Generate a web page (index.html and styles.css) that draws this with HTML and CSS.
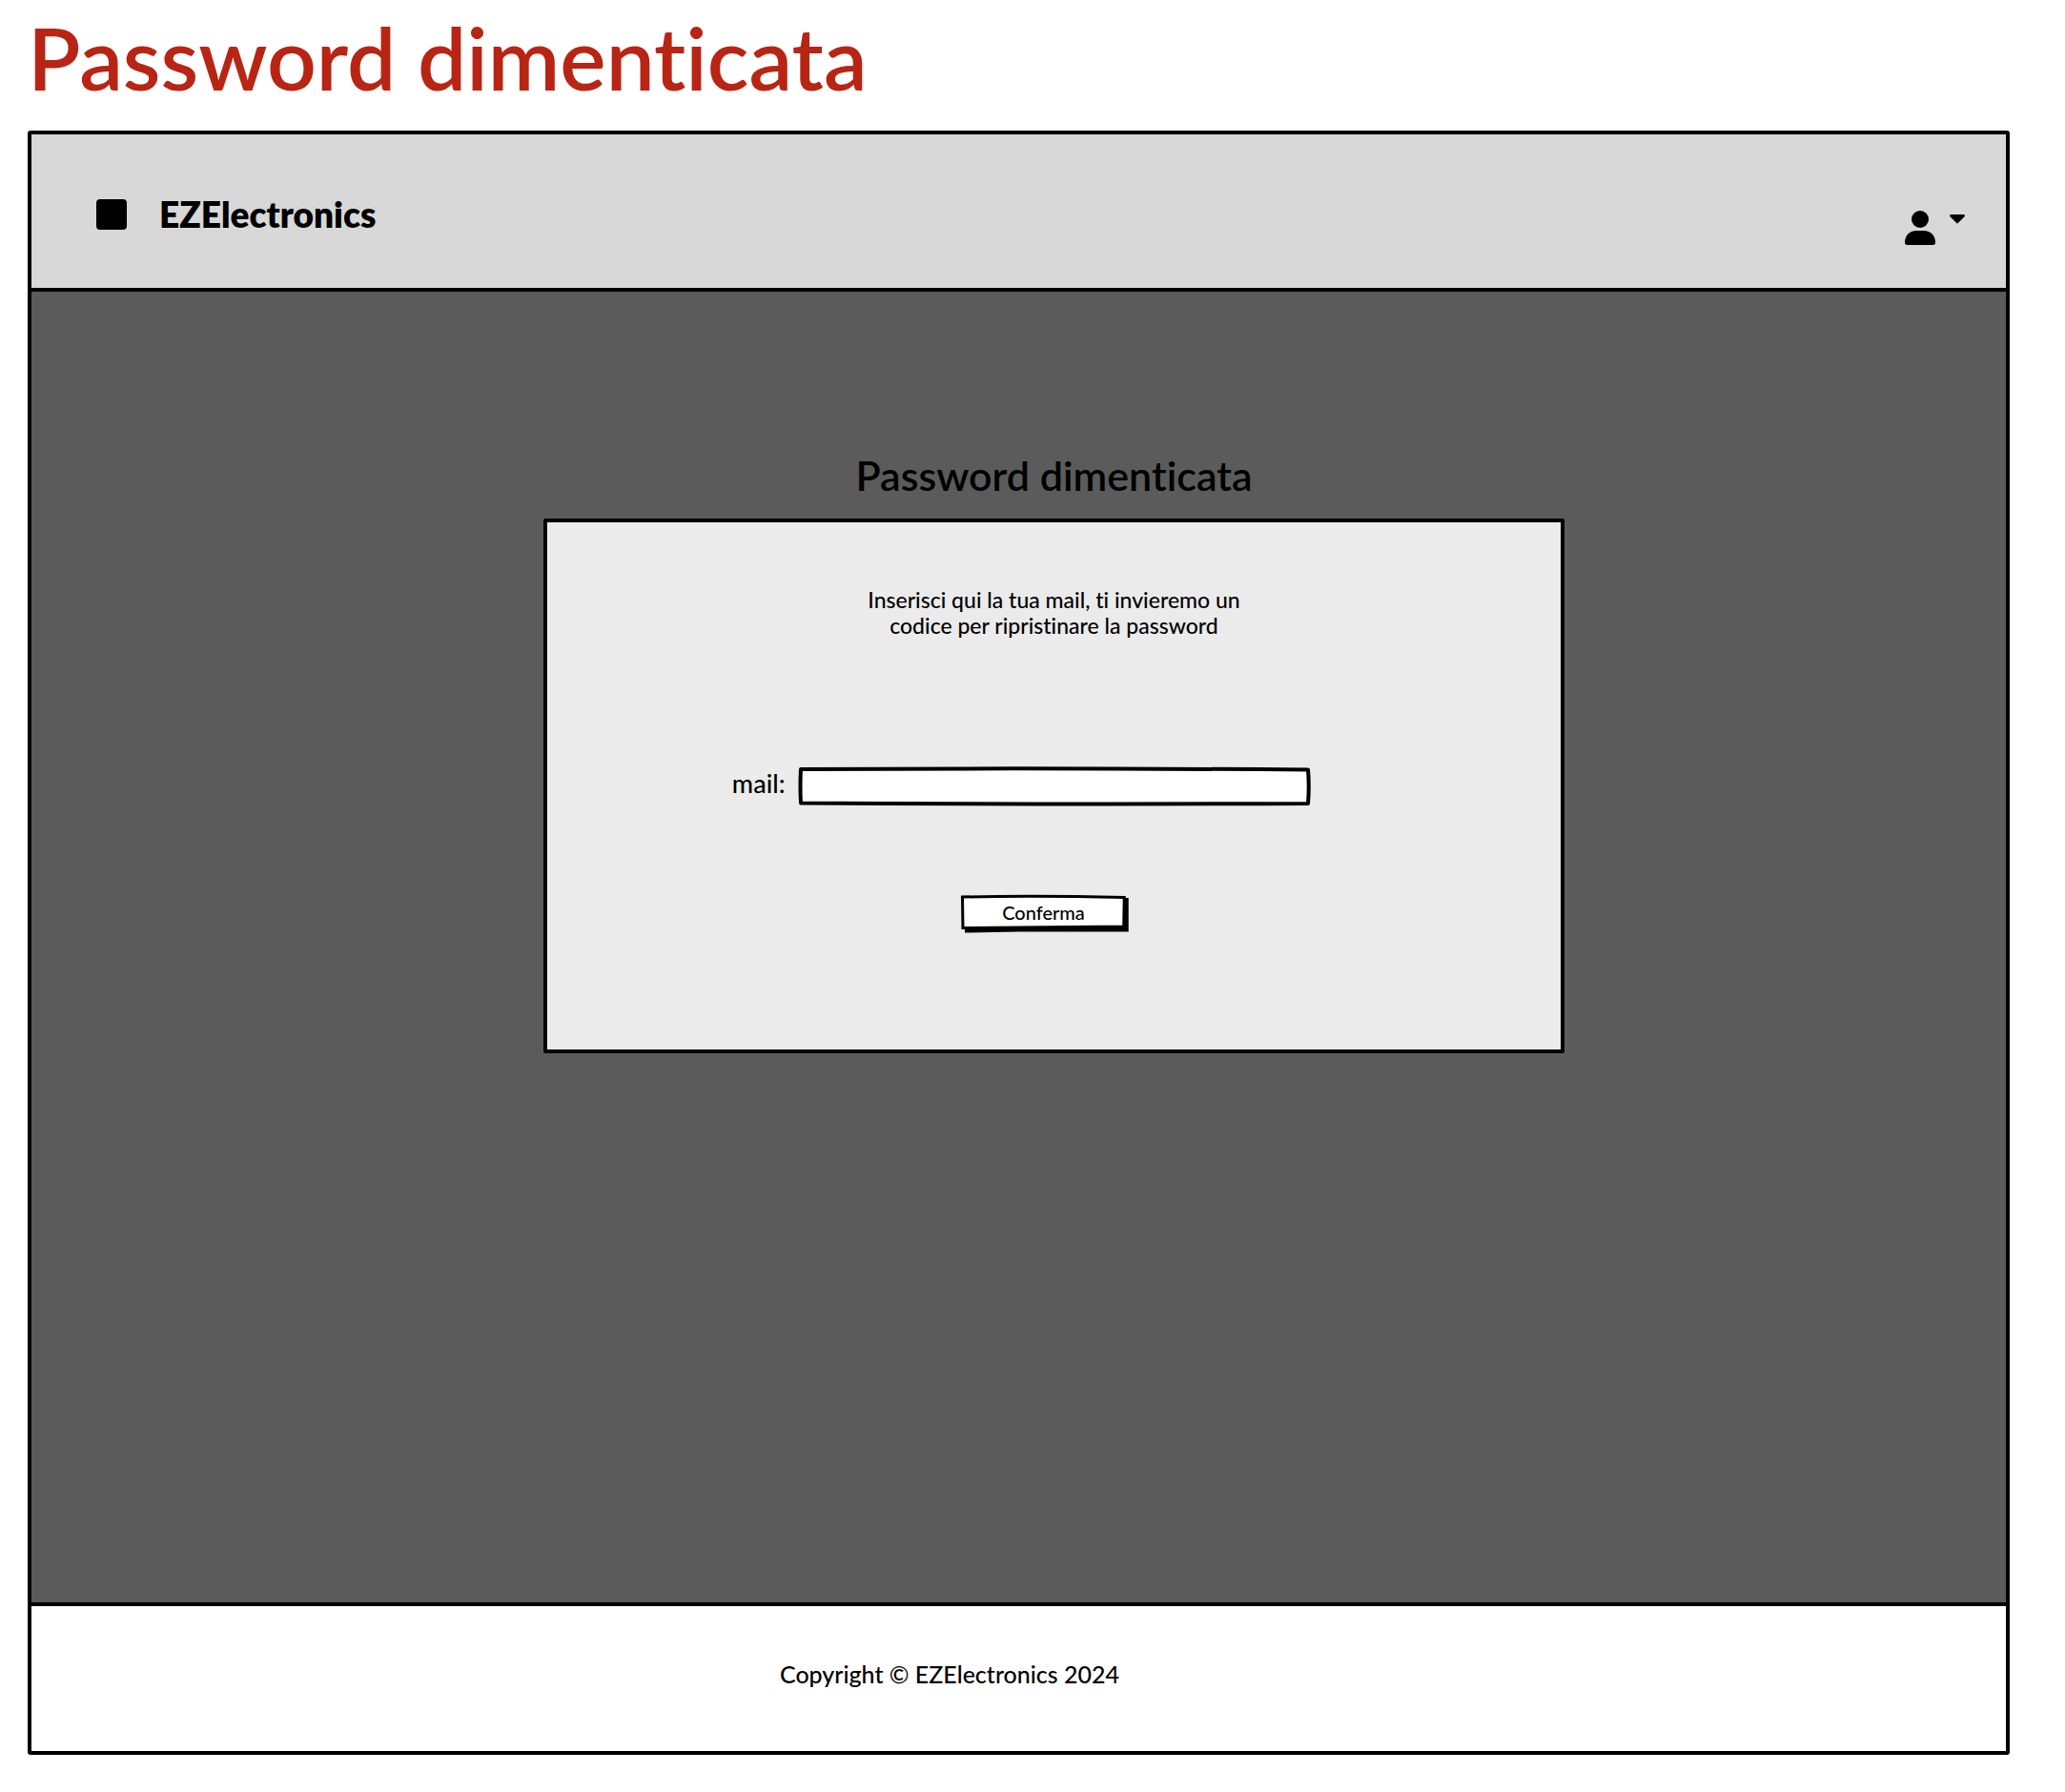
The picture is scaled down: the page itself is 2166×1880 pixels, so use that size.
FILE: index.html
```html
<!DOCTYPE html>
<html lang="it">
<head>
  <meta charset="utf-8">
  <meta name="viewport" content="width=device-width, initial-scale=1">
  <title>Password dimenticata</title>
  <link rel="stylesheet" href="styles.css">
</head>
<body>
  <h1 class="page-title">Password dimenticata</h1>
  <div class="frame">
    <header class="header">
      <a class="brand" href="#">
        <span class="brand-mark"></span>
        <span>EZElectronics</span>
      </a>
      <button class="account" type="button" aria-label="Account">
        <svg class="account-user" viewBox="0 0 32 37" aria-hidden="true">
          <circle cx="16" cy="10" r="9"/>
          <path d="M2.500 37C.8 37 0 36 0 34.500 0 27 5 22 12 22h8c7 0 12 5 12 12.500 0 1.500-.8 2.500-2.500 2.500z"/>
        </svg>
        <svg class="account-caret" viewBox="0 0 16 10" aria-hidden="true">
          <path d="M1.500 0h13C16 0 16.300 1.500 15.300 2.500L8.800 9c-.5.500-1.100.500-1.600 0L.7 2.500C-.3 1.500 0 0 1.500 0z"/>
        </svg>
      </button>
    </header>
    <main class="main">
      <h2 class="card-title">Password dimenticata</h2>
      <form class="card">
        <p class="card-text">Inserisci qui la tua mail, ti invieremo un codice per ripristinare la password</p>
        <div class="field">
          <label class="field-label" for="mail">mail:</label>
          <div class="sketch">
            <svg class="sketch-outline" viewBox="0 0 536 40" preserveAspectRatio="none" aria-hidden="true">
              <path d="M2 2Q260 .5 534 2.500 535.500 20 534 38 270 39 2 37.500 1 20 2 2z" fill="#fff" stroke="#000" stroke-width="4" stroke-linejoin="round"/>
            </svg>
            <input class="field-input" id="mail" type="email">
          </div>
        </div>
        <button class="sketch confirm" type="submit">
          <svg class="sketch-outline" viewBox="0 0 173 36" preserveAspectRatio="none" aria-hidden="true">
            <path d="M4 33V39.500L60 38.500 176 38.500V3H171V32z"/>
            <path d="M1.500 2Q80 .5 171.500 2.500L171 33Q90 33.500 2 34.500z" fill="#fff" stroke="#000" stroke-width="3"/>
          </svg>
          <span class="confirm-text">Conferma</span>
        </button>
      </form>
    </main>
    <footer class="footer">Copyright © EZElectronics 2024</footer>
  </div>
</body>
</html>
```
FILE: styles.css
```css
* {
  box-sizing: border-box;
}

body {
  margin: 0;
  padding: 0 58px 40px 29px;
  background: #fff;
  color: #000;
  font-family: Lato, "Open Sans", sans-serif;
  font-weight: 500;
  font-variant-ligatures: none;
}

button,
input {
  margin: 0;
  padding: 0;
  border: 0;
  background: none;
  color: inherit;
  font: inherit;
}

.page-title {
  margin: 0;
  padding-bottom: 17px;
  color: #b82514;
  font-size: 91px;
  font-weight: 600;
  line-height: 120px;
}

.frame {
  border: 4px solid #000;
  border-radius: 3px;
}

.header {
  display: flex;
  justify-content: space-between;
  align-items: flex-start;
  padding: 60px 43px 45px 68px;
  border-bottom: 4px solid #000;
  background: #d8d8d8;
}

.brand {
  display: flex;
  align-items: center;
  gap: 34px;
  color: inherit;
  font-size: 37px;
  font-weight: 800;
  line-height: 48px;
  text-decoration: none;
}

.brand-mark {
  width: 32px;
  height: 32px;
  border-radius: 4px;
  background: #000;
}

.account {
  display: flex;
  align-items: flex-start;
  gap: 15px;
  padding-top: 19px;
}

.account-user {
  width: 32px;
  height: 37px;
}

.account-caret {
  width: 16px;
  height: 10px;
  margin-top: 5px;
}

.main {
  display: flex;
  flex-direction: column;
  align-items: center;
  gap: 20px;
  padding: 168px 0 576px 74px;
  background: #5b5b5b;
}

.card-title {
  margin: 0;
  font-size: 43px;
  font-weight: 600;
  line-height: 50px;
}

.card {
  display: flex;
  flex-direction: column;
  align-items: center;
  width: 100%;
  max-width: 1071px;
  padding: 68px 20px 126px;
  border: 4px solid #000;
  border-radius: 2px;
  background: #ebebeb;
}

.card-text {
  max-width: 420px;
  margin: 0 0 135px;
  font-size: 23px;
  line-height: 27px;
  text-align: center;
}

.field {
  display: grid;
  grid-template-columns: 1fr minmax(0, 536px) 1fr;
  gap: 14px;
  width: 100%;
  margin-bottom: 94px;
}

.field-label {
  font-size: 27px;
  line-height: 34px;
  text-align: right;
}

.sketch {
  position: relative;
}

.sketch-outline {
  position: absolute;
  inset: 0;
  width: 100%;
  height: 100%;
  overflow: visible;
}

.field-input {
  position: relative;
  display: block;
  width: 100%;
  height: 40px;
  padding: 5px 12px;
  font-size: 23px;
  line-height: 30px;
  outline: none;
}

.confirm {
  margin-right: 22px;
  padding: 4px 43px;
  font-size: 20px;
  line-height: 28px;
}

.confirm-text {
  position: relative;
}

.footer {
  padding: 56px 145px 66px 0;
  border-top: 4px solid #000;
  font-size: 25px;
  line-height: 30px;
  text-align: center;
}
```
